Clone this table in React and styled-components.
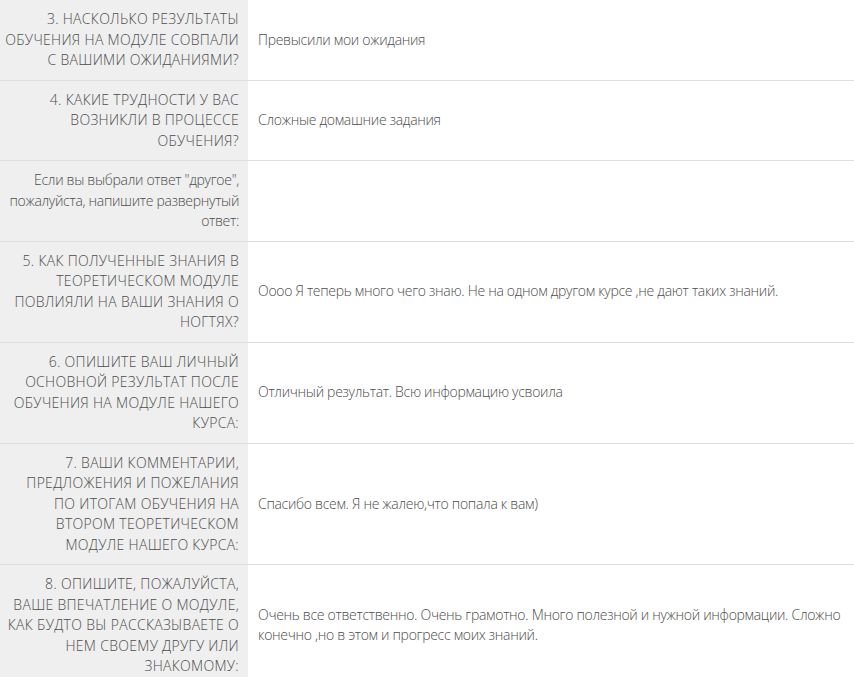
import React from 'react';
import styled, { createGlobalStyle } from 'styled-components';

const rows = [
  {
    q: '3. Насколько результаты обучения на модуле совпали с вашими ожиданиями?',
    a: 'Превысили мои ожидания',
  },
  {
    q: '4. Какие трудности у вас возникли в процессе обучения?',
    a: 'Сложные домашние задания',
  },
  {
    q: 'Если вы выбрали ответ "другое", пожалуйста, напишите развернутый ответ:',
    a: '',
    plain: true,
  },
  {
    q: '5. Как полученные знания в теоретическом модуле повлияли на ваши знания о ногтях?',
    a: 'Оооо Я теперь много чего знаю. Не на одном другом курсе ,не дают таких знаний.',
  },
  {
    q: '6. Опишите ваш личный основной результат после обучения на модуле нашего курса:',
    a: 'Отличный результат. Всю информацию усвоила',
  },
  {
    q: '7. Ваши комментарии, предложения и пожелания по итогам обучения на втором теоретическом модуле нашего курса:',
    a: 'Спасибо всем. Я не жалею,что попала к вам)',
  },
  {
    q: '8. Опишите, пожалуйста, ваше впечатление о модуле, как будто вы рассказываете о нем своему другу или знакомому:',
    a: 'Очень все ответственно. Очень грамотно. Много полезной и нужной информации. Сложно конечно ,но в этом и прогресс моих знаний.',
  },
];

const GlobalStyle = createGlobalStyle`
  body {
    margin: 0;
    background: #fff;
    font-family: "Open Sans", "Liberation Sans", sans-serif;
  }
`;

const Table = styled.table`
  width: 100%;
  border-collapse: collapse;
  font-size: 14px;
  font-weight: 300;
  line-height: 20.5px;
  letter-spacing: -0.3px;
  color: #4d4d4d;
`;

const Row = styled.tr`
  border-bottom: 1px solid #dedede;
`;

// left column: question, uppercase unless it's a free-text hint
const Question = styled.th`
  width: 248px;
  box-sizing: border-box;
  padding: 9px 9px 9px 3px;
  background: #efefef;
  text-align: right;
  vertical-align: middle;
  font-weight: 300;
  text-transform: ${(p) => (p.$plain ? 'none' : 'uppercase')};
  letter-spacing: ${(p) => (p.$plain ? '-0.3px' : '0.3px')};
`;

const Answer = styled.td`
  padding: 9px 10px;
  vertical-align: middle;
`;

export default function App() {
  return (
    <>
      <GlobalStyle />
      <Table>
        <tbody>
          {rows.map((row) => (
            <Row key={row.q}>
              <Question $plain={row.plain}>{row.q}</Question>
              <Answer>{row.a}</Answer>
            </Row>
          ))}
        </tbody>
      </Table>
    </>
  );
}
